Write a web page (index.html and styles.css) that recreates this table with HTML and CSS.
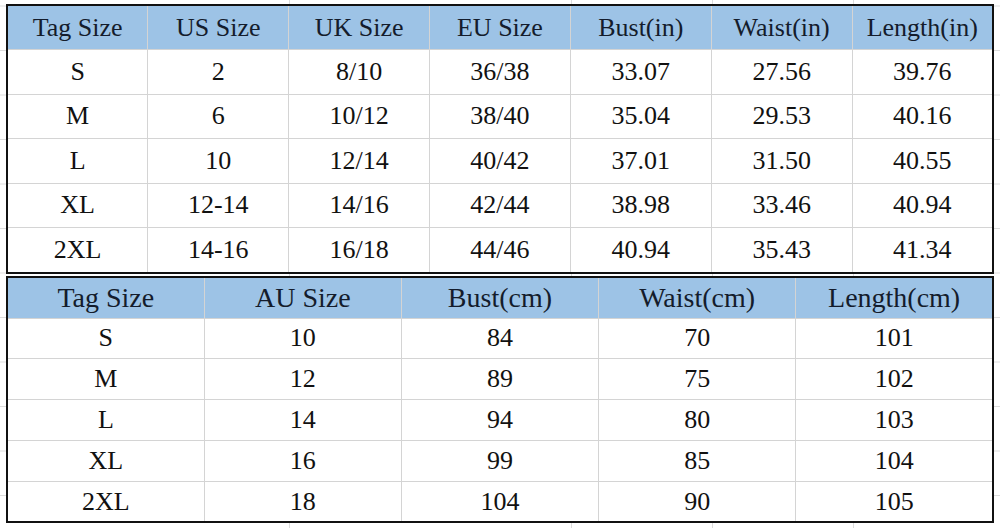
FILE: index.html
```html
<!DOCTYPE html>
<html>
<head>
<meta charset="utf-8">
<link rel="stylesheet" href="styles.css">
</head>
<body>
<div class="sheet">
  <table class="t t1">
    <thead>
      <tr><th>Tag Size</th><th>US Size</th><th>UK Size</th><th>EU Size</th><th>Bust(in)</th><th>Waist(in)</th><th>Length(in)</th></tr>
    </thead>
    <tbody>
      <tr><td>S</td><td>2</td><td>8/10</td><td>36/38</td><td>33.07</td><td>27.56</td><td>39.76</td></tr>
      <tr><td>M</td><td>6</td><td>10/12</td><td>38/40</td><td>35.04</td><td>29.53</td><td>40.16</td></tr>
      <tr><td>L</td><td>10</td><td>12/14</td><td>40/42</td><td>37.01</td><td>31.50</td><td>40.55</td></tr>
      <tr><td>XL</td><td>12-14</td><td>14/16</td><td>42/44</td><td>38.98</td><td>33.46</td><td>40.94</td></tr>
      <tr><td>2XL</td><td>14-16</td><td>16/18</td><td>44/46</td><td>40.94</td><td>35.43</td><td>41.34</td></tr>
    </tbody>
  </table>
  <table class="t t2">
    <thead>
      <tr><th>Tag Size</th><th>AU Size</th><th>Bust(cm)</th><th>Waist(cm)</th><th>Length(cm)</th></tr>
    </thead>
    <tbody>
      <tr><td>S</td><td>10</td><td>84</td><td>70</td><td>101</td></tr>
      <tr><td>M</td><td>12</td><td>89</td><td>75</td><td>102</td></tr>
      <tr><td>L</td><td>14</td><td>94</td><td>80</td><td>103</td></tr>
      <tr><td>XL</td><td>16</td><td>99</td><td>85</td><td>104</td></tr>
      <tr><td>2XL</td><td>18</td><td>104</td><td>90</td><td>105</td></tr>
    </tbody>
  </table>
</div>
</body>
</html>
```
FILE: styles.css
```css
html, body {
  margin: 0;
  padding: 0;
}
body {
  width: 1000px;
  height: 528px;
  overflow: hidden;
  background-color: #fff;
  background-image:
    linear-gradient(to right, #dcdcdc 1px, transparent 1px),
    linear-gradient(to bottom, #dcdcdc 1px, transparent 1px);
  background-size: 141px 44.5px;
  background-position: 7px 5.5px;
  font-family: "Liberation Serif", "Times New Roman", serif;
  color: #111;
}
.sheet {
  padding: 4px 0 0 6px;
  display: flex;
  flex-direction: column;
  gap: 2px;
}
.t {
  border-collapse: collapse;
  table-layout: fixed;
  width: 988px;
  border: 2px solid #111;
  background: #fff;
}
.t th, .t td {
  border: 1px solid #d4d4d4;
  text-align: center;
  vertical-align: middle;
  padding: 0;
  font-weight: normal;
  white-space: nowrap;
}
.t th {
  background: #9dc3e6;
  color: #141c2c;
}
.t1 th {
  height: 43px;
  font-size: 26px;
}
.t1 td {
  height: 43.5px;
  font-size: 26px;
}
.t2 th {
  height: 40px;
  font-size: 28px;
}
.t2 td {
  height: 39.8px;
  font-size: 26px;
}
```
